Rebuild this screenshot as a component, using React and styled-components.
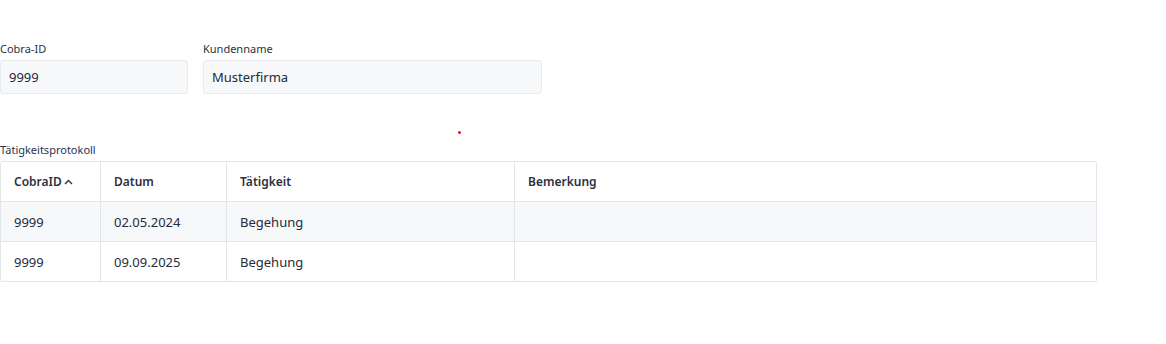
import React from "react";
import styled, { createGlobalStyle } from "styled-components";

const GlobalStyle = createGlobalStyle`
  body {
    margin: 0;
    background: #fff;
    font-family: "Noto Sans", "Open Sans", sans-serif;
    color: #1f2937;
  }
`;

const Page = styled.div`
  padding-top: 41px;
  width: 1097px;
`;

const FieldRow = styled.div`
  display: flex;
  gap: 15px;
`;

const Field = styled.div`
  display: flex;
  flex-direction: column;
  width: ${(props) => props.width}px;
`;

const Label = styled.label`
  font-size: 11px;
  line-height: 15px;
  color: #2a3345;
  margin-bottom: 4px;
`;

const Input = styled.div`
  height: 34px;
  box-sizing: border-box;
  border: 1px solid #e8eaee;
  border-radius: 3px;
  background: #f7f8fa;
  padding: 0 8px;
  display: flex;
  align-items: center;
  font-size: 13px;
  color: #222b3a;
`;

const Spacer = styled.div`
  height: 48px;
  position: relative;
`;

const Dot = styled.span`
  position: absolute;
  left: 458px;
  top: 37px;
  width: 3px;
  height: 3px;
  border-radius: 50%;
  background: #e8141b;
`;

const SectionLabel = styled(Label)`
  display: block;
  margin-bottom: 4px;
  color: #2a3350;
`;

const Table = styled.table`
  width: 1097px;
  border-collapse: separate;
  border-spacing: 0;
  border: 1px solid #e4e5ea;
  border-radius: 3px;
  box-shadow: 0 1px 1px 0 rgba(0, 0, 0, 0.1);
  font-size: 13px;
  color: #252c3a;
  table-layout: fixed;
  overflow: hidden;
`;

const Th = styled.th`
  height: 39px;
  text-align: left;
  padding: 0 13px;
  font-size: 12px;
  font-weight: 600;
  color: #2b313d;
  border-left: ${(props) => (props.first ? "none" : "1px solid #e4e5ea")};
  border-bottom: 1px solid #e4e5ea;
  background: #fff;
`;

const Td = styled.td`
  height: 39px;
  padding: 0 13px;
  border-left: ${(props) => (props.first ? "none" : "1px solid #e4e5ea")};
  border-bottom: ${(props) => (props.last ? "none" : "1px solid #e4e5ea")};
  background: ${(props) => (props.striped ? "#f7f8fa" : "#fff")};
`;

const SortIcon = styled.svg`
  margin-left: 2px;
  vertical-align: 1px;
`;

const rows = [
  { id: "9999", datum: "02.05.2024", taetigkeit: "Begehung", bemerkung: "" },
  { id: "9999", datum: "09.09.2025", taetigkeit: "Begehung", bemerkung: "" },
];

export default function App() {
  return (
    <>
      <GlobalStyle />
      <Page>
        <FieldRow>
          <Field width={188}>
            <Label>Cobra-ID</Label>
            <Input>9999</Input>
          </Field>
          <Field width={339}>
            <Label>Kundenname</Label>
            <Input>Musterfirma</Input>
          </Field>
        </FieldRow>
        <Spacer>
          <Dot />
        </Spacer>
        <SectionLabel>Tätigkeitsprotokoll</SectionLabel>
        <Table>
          <colgroup>
            <col style={{ width: 99 }} />
            <col style={{ width: 126 }} />
            <col style={{ width: 288 }} />
            <col />
          </colgroup>
          <thead>
            <tr>
              <Th first>
                CobraID
                <SortIcon width="9" height="6" viewBox="0 0 9 6">
                  <path d="M1 5l3.5-3.5L8 5" fill="none" stroke="#2b313d" strokeWidth="1.4" />
                </SortIcon>
              </Th>
              <Th>Datum</Th>
              <Th>Tätigkeit</Th>
              <Th>Bemerkung</Th>
            </tr>
          </thead>
          <tbody>
            {rows.map((row, i) => (
              <tr key={i}>
                <Td first striped={i % 2 === 0} last={i === rows.length - 1}>
                  {row.id}
                </Td>
                <Td striped={i % 2 === 0} last={i === rows.length - 1}>
                  {row.datum}
                </Td>
                <Td striped={i % 2 === 0} last={i === rows.length - 1}>
                  {row.taetigkeit}
                </Td>
                <Td striped={i % 2 === 0} last={i === rows.length - 1}>
                  {row.bemerkung}
                </Td>
              </tr>
            ))}
          </tbody>
        </Table>
      </Page>
    </>
  );
}
